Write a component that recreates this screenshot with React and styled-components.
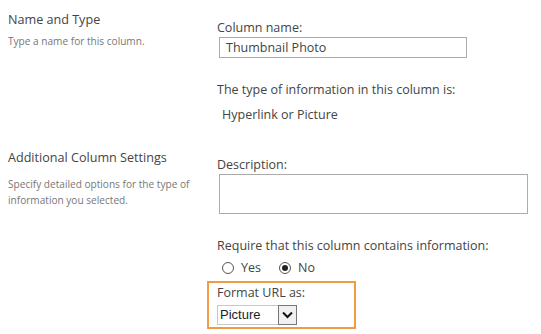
import React from 'react';
import styled, { createGlobalStyle } from 'styled-components';

const Global = createGlobalStyle`
  html, body {
    margin: 0;
    padding: 0;
    background: #fff;
  }
  body {
    font-family: "Open Sans", "Noto Sans", sans-serif;
    color: #444;
  }
`;

const Page = styled.div`
  width: 541px;
  height: 334px;
  overflow: hidden;
`;

const Section = styled.div`
  display: grid;
  grid-template-columns: 217px 1fr;
  margin-top: ${(p) => p.$top}px;
`;

const Side = styled.div`
  padding-left: 8px;
  display: flex;
  flex-direction: column;
`;

const SideTitle = styled.div`
  font-size: 12.6px;
  line-height: 16px;
  color: #444;
`;

const SideText = styled.div`
  font-size: 10.1px;
  line-height: 16px;
  color: #777;
  margin-top: ${(p) => p.$gap}px;
  width: 200px;
`;

const Body = styled.div`
  display: flex;
  flex-direction: column;
  padding-top: ${(p) => p.$top}px;
`;

const Label = styled.div`
  font-size: 12.5px;
  line-height: 16px;
  color: #444;
  margin-top: ${(p) => p.$gap || 0}px;
  padding-left: ${(p) => p.$indent || 0}px;
`;

const TextBox = styled.div`
  box-sizing: border-box;
  margin: 1px 0 0 2px;
  width: ${(p) => p.$w}px;
  height: ${(p) => p.$h}px;
  border: 1px solid #ababab;
  font-size: 12.5px;
  line-height: 19px;
  padding-left: 6px;
  color: #444;
`;

const RadioRow = styled.div`
  display: flex;
  align-items: center;
  gap: 18px;
  margin-top: 6px;
  padding-left: 5px;
`;

const RadioOption = styled.label`
  display: flex;
  align-items: center;
  gap: 7px;
  font-size: 12.5px;
  line-height: 16px;
  color: #444;
`;

const Circle = styled.span`
  box-sizing: border-box;
  width: 12px;
  height: 12px;
  border-radius: 50%;
  border: 1px solid #555;
  display: flex;
  align-items: center;
  justify-content: center;
  &::after {
    content: '';
    width: 6px;
    height: 6px;
    border-radius: 50%;
    background: ${(p) => (p.$on ? '#222' : 'transparent')};
  }
`;

const Highlight = styled.div`
  box-sizing: border-box;
  margin: 5px 0 0 -10px;
  width: 149px;
  height: 48px;
  border: 2px solid #f39a45;
  padding: 2px 0 0 8px;
`;

const Select = styled.div`
  display: flex;
  box-sizing: border-box;
  width: 80px;
  height: 20px;
  margin-top: 4px;
  border: 1px solid #c8c8c8;
`;

const SelectValue = styled.div`
  flex: 1;
  font-family: "Liberation Sans", Arial, sans-serif;
  font-size: 13px;
  line-height: 18px;
  padding-left: 2px;
  color: #222;
`;

const SelectButton = styled.div`
  box-sizing: border-box;
  width: 19px;
  margin: -1px -1px -1px 0;
  border: 1px solid #777;
  background: #f0f0f0;
  display: flex;
  align-items: center;
  justify-content: center;
`;

export default function App() {
  return (
    <Page>
      <Global />
      <Section $top={12}>
        <Side>
          <SideTitle>Name and Type</SideTitle>
          <SideText $gap={5}>Type a name for this column.</SideText>
        </Side>
        <Body $top={8}>
          <Label>Column name:</Label>
          <TextBox $w={248} $h={21}>Thumbnail Photo</TextBox>
          <Label $gap={24}>The type of information in this column is:</Label>
          <Label $gap={9} $indent={5}>Hyperlink or Picture</Label>
        </Body>
      </Section>
      <Section $top={27}>
        <Side>
          <SideTitle>Additional Column Settings</SideTitle>
          <SideText $gap={10}>Specify detailed options for the type of information you selected.</SideText>
        </Side>
        <Body $top={7}>
          <Label>Description:</Label>
          <TextBox $w={309} $h={40} />
          <Label $gap={24}>Require that this column contains information:</Label>
          <RadioRow>
            <RadioOption>
              <Circle />
              Yes
            </RadioOption>
            <RadioOption>
              <Circle $on />
              No
            </RadioOption>
          </RadioRow>
          <Highlight>
            <Label>Format URL as:</Label>
            <Select>
              <SelectValue>Picture</SelectValue>
              <SelectButton>
                <svg width="11" height="8" viewBox="0 0 11 8">
                  <path d="M1 1.5 L5.5 6 L10 1.5" fill="none" stroke="#111" strokeWidth="2" />
                </svg>
              </SelectButton>
            </Select>
          </Highlight>
        </Body>
      </Section>
    </Page>
  );
}
